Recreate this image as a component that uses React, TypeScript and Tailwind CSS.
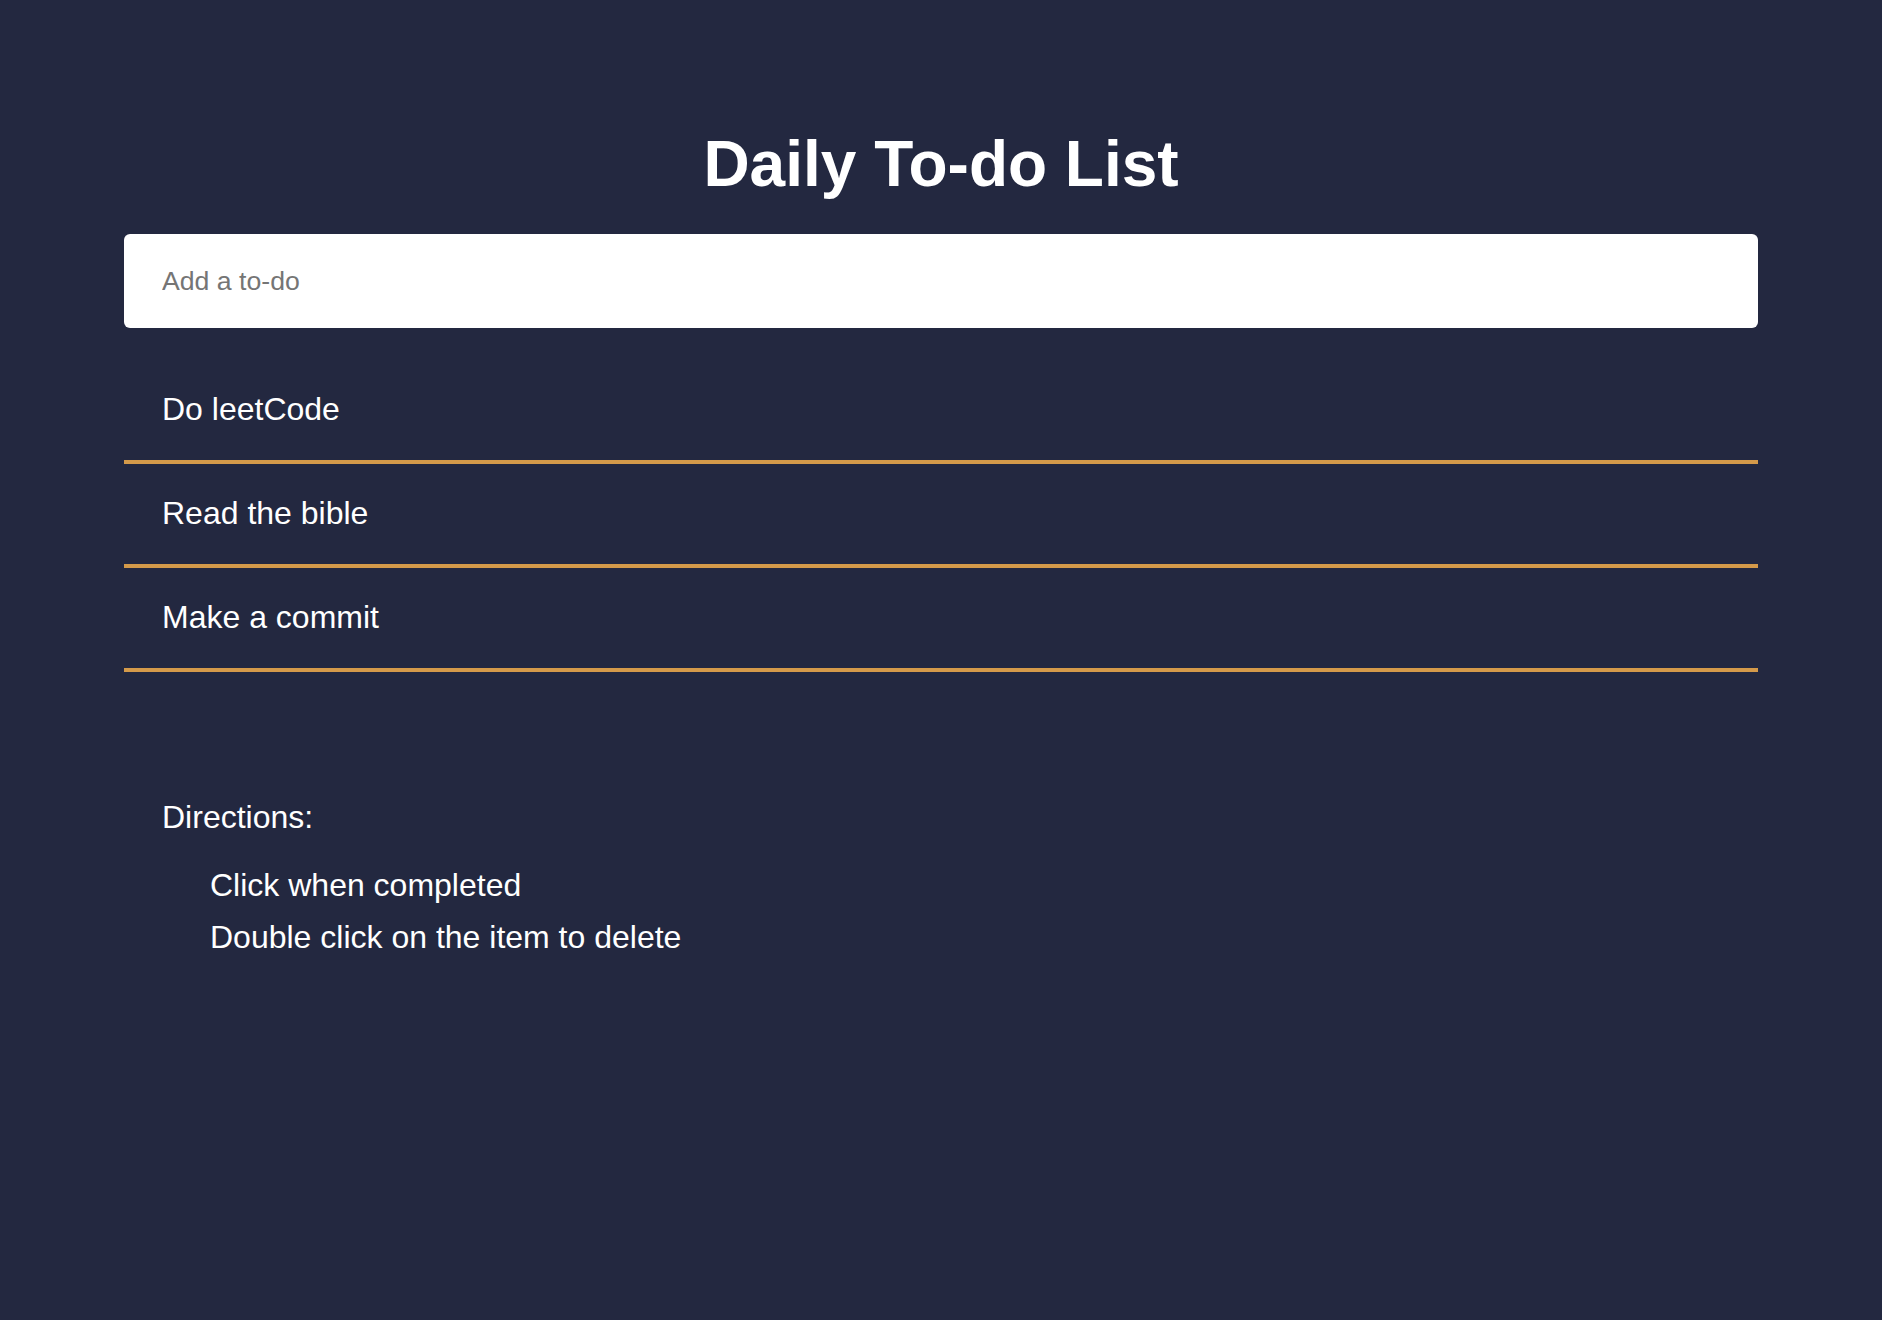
const todos = ["Do leetCode", "Read the bible", "Make a commit"];

export default function App() {
  return (
    <div className="min-h-screen w-full bg-[#232840] text-white font-['Liberation_Sans',Arial,sans-serif]">
      <div className="mx-[124px] flex flex-col pt-[127px]">
        <h1 className="text-center text-[64px] font-bold leading-[74px]">Daily To-do List</h1>

        <input
          type="text"
          placeholder="Add a to-do"
          className="mt-[33px] h-[94px] w-full rounded-[6px] bg-white px-[38px] text-[26.67px] text-gray-900 outline-none placeholder:text-[#757575]"
        />

        <ul className="mt-[32px]">
          {todos.map((todo) => (
            <li
              key={todo}
              className="border-b-4 border-[#d49a4a] px-[38px] pt-[31px] pb-[33px] text-[32px] leading-[36px]"
            >
              {todo}
            </li>
          ))}
        </ul>

        <div className="mt-[127px] px-[38px]">
          <p className="text-[32px] leading-[36px]">Directions:</p>
          <ul className="mt-[24px] pl-[48px] text-[32px] leading-[52px]">
            <li>Click when completed</li>
            <li>Double click on the item to delete</li>
          </ul>
        </div>
      </div>
    </div>
  );
}
